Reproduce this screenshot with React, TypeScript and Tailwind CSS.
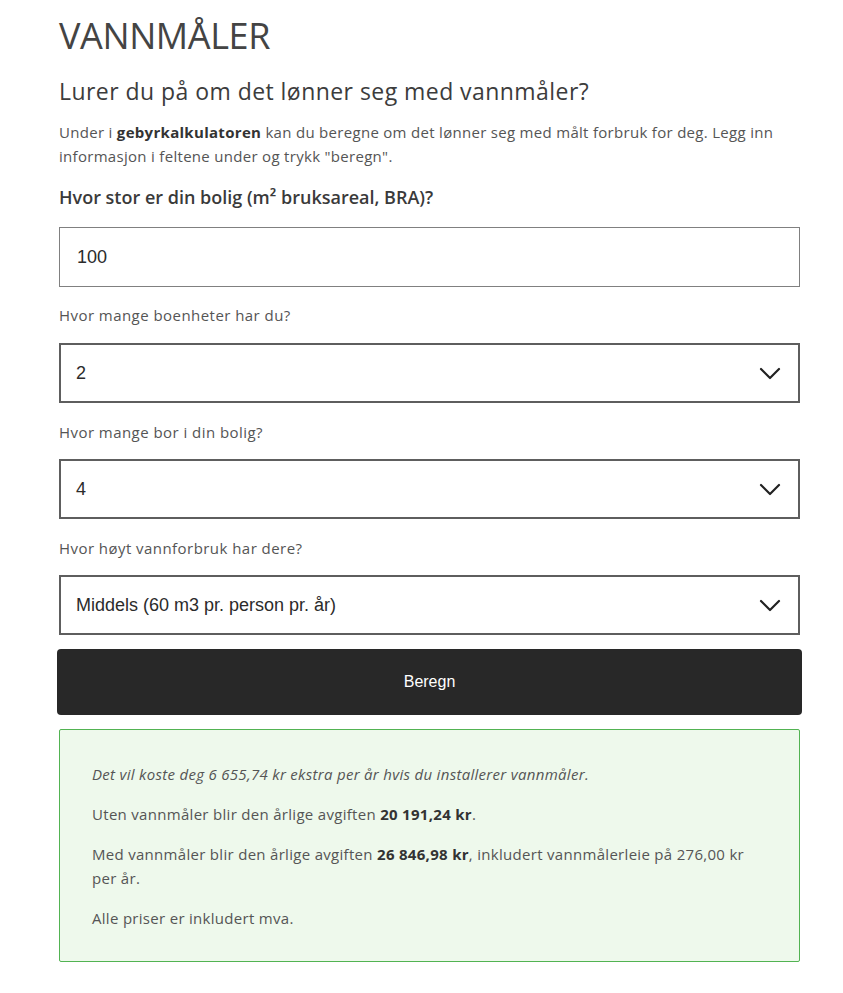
const quick = "font-['Open_Sans','Noto_Sans',sans-serif]";

function Chevron() {
  return (
    <svg width="22" height="13" viewBox="0 0 22 13" fill="none" stroke="#222" strokeWidth="2.2" strokeLinecap="round" strokeLinejoin="round">
      <polyline points="2 2 11 11 20 2" />
    </svg>
  );
}

function SelectBox({ value }: { value: string }) {
  return (
    <div className="h-[60px] w-[741px] border-2 border-[#5e5e5e] bg-white flex items-center justify-between pl-[15px] pr-[17px] font-['Liberation_Sans',Arial,sans-serif] text-[18px] text-[#2b2b2b]">
      <span>{value}</span>
      <Chevron />
    </div>
  );
}

function FieldLabel({ children, className }: { children: React.ReactNode; className: string }) {
  return <p className={`text-[15px] leading-[24px] tracking-[0.45px] text-[#555] ${className}`}>{children}</p>;
}

export default function App() {
  return (
    <div className={`min-h-[993px] bg-white pl-[59px] pt-[13px] ${quick}`}>
      <div className="w-[741px]">
        <h1 className="text-[36px] leading-[46px] text-[#444] tracking-[-0.4px]">VANNMÅLER</h1>
        <h2 className="mt-[17px] text-[23px] leading-[30px] text-[#3c3c3c] font-medium tracking-[0.45px]">
          Lurer du på om det lønner seg med vannmåler?
        </h2>
        <p className="mt-[14px] text-[15px] leading-[24px] tracking-[0.3px] text-[#555]">
          Under i <strong className="font-bold text-[#333]">gebyrkalkulatoren</strong> kan du beregne om det lønner seg med målt forbruk for deg. Legg inn
          <br />
          informasjon i feltene under og trykk "beregn".
        </p>
        <p className="mt-[16px] text-[18px] leading-[26px] font-semibold text-[#3a3a3a]">
          Hvor stor er din bolig (m² bruksareal, BRA)?
        </p>

        <div className="mt-[17px] h-[60px] border border-[#808080] bg-white flex items-center pl-[17px] font-['Liberation_Sans',Arial,sans-serif] text-[18px] text-[#2b2b2b]">
          100
        </div>

        <FieldLabel className="mt-[16px]">Hvor mange boenheter har du?</FieldLabel>
        <div className="mt-[16px]">
          <SelectBox value="2" />
        </div>

        <FieldLabel className="mt-[17px]">Hvor mange bor i din bolig?</FieldLabel>
        <div className="mt-[15px]">
          <SelectBox value="4" />
        </div>

        <FieldLabel className="mt-[17px]">Hvor høyt vannforbruk har dere?</FieldLabel>
        <div className="mt-[15px]">
          <SelectBox value="Middels (60 m3 pr. person pr. år)" />
        </div>

        <button className="mt-[14px] -ml-[2px] h-[66px] w-[745px] rounded-[4px] bg-[#282828] text-white font-['Liberation_Sans',Arial,sans-serif] text-[16px]">
          Beregn
        </button>

        <div className="mt-[14px] h-[233px] rounded-[2px] border border-[#52b352] bg-[#eef9ec] p-8 text-[15px] leading-[24px] tracking-[0.3px] text-[#555]">
          <p className="italic">Det vil koste deg 6 655,74 kr ekstra per år hvis du installerer vannmåler.</p>
          <p className="mt-4">
            Uten vannmåler blir den årlige avgiften <strong className="font-bold text-[#333]">20 191,24 kr</strong>.
          </p>
          <p className="mt-4">
            Med vannmåler blir den årlige avgiften <strong className="font-bold text-[#333]">26 846,98 kr</strong>, inkludert vannmålerleie på 276,00 kr
            <br />
            per år.
          </p>
          <p className="mt-4">Alle priser er inkludert mva.</p>
        </div>
      </div>
    </div>
  );
}
